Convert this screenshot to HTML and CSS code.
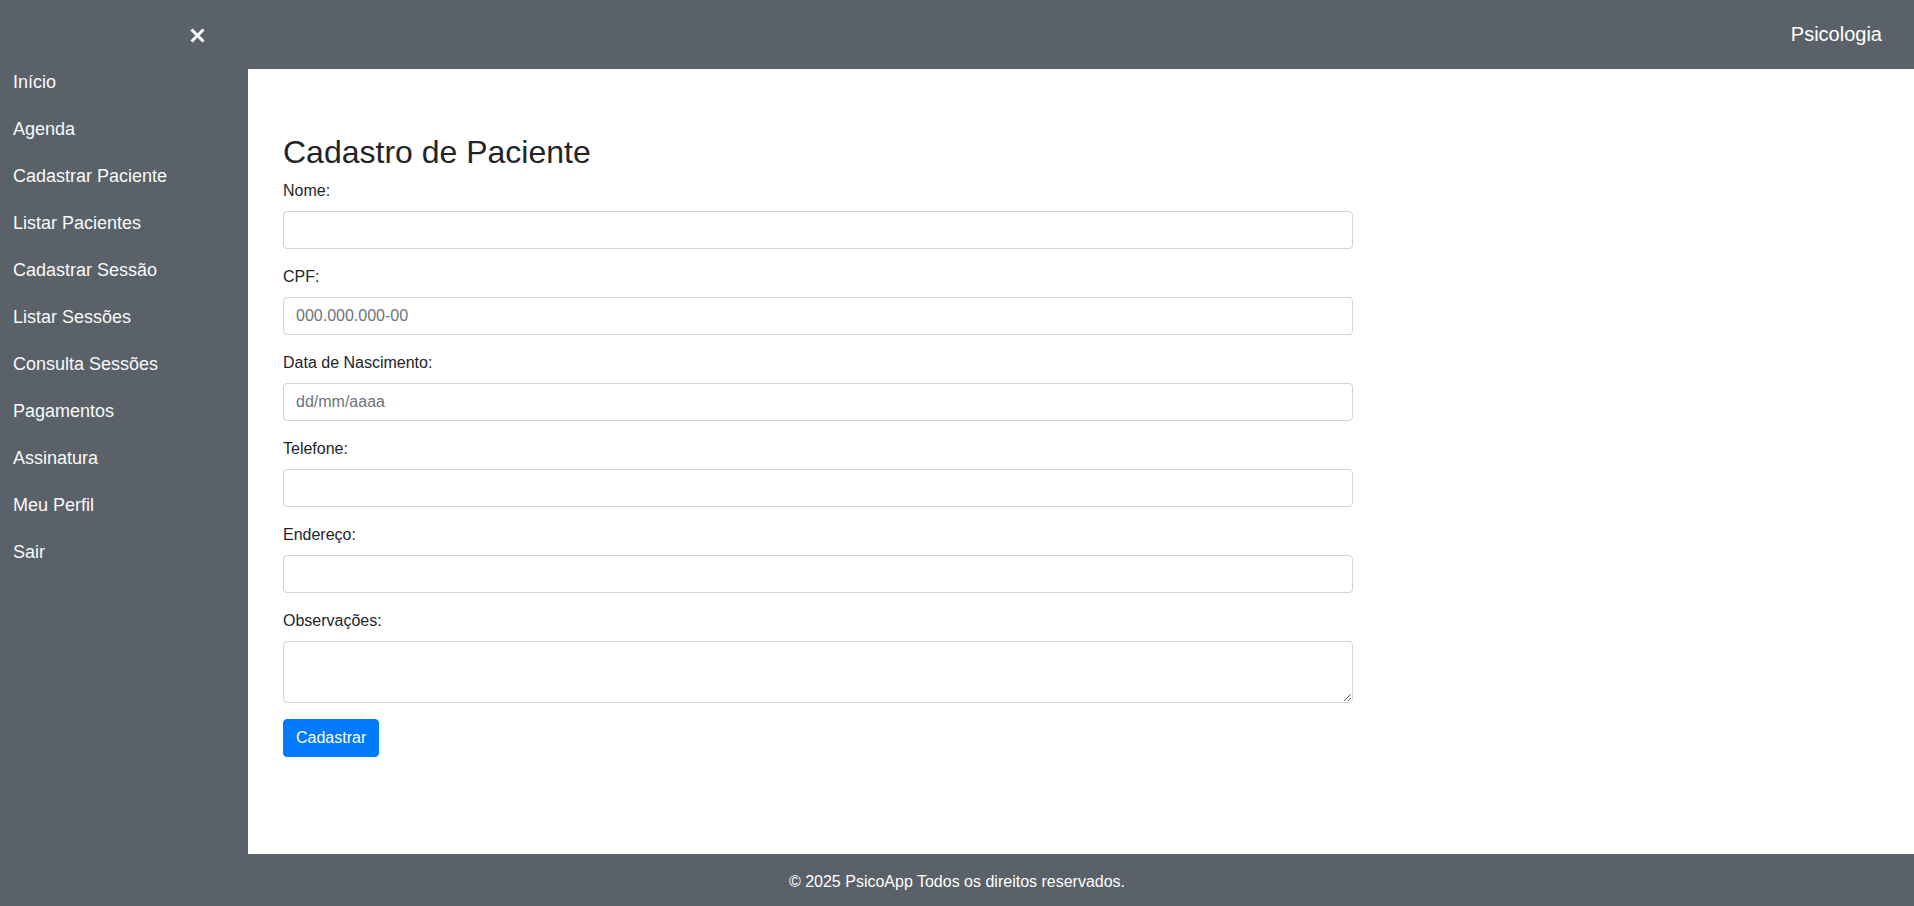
FILE: index.html
```html
<!DOCTYPE html>
<html lang="pt-BR">
<head>
  <meta charset="UTF-8">
  <meta name="viewport" content="width=device-width, initial-scale=1.0">
  <title>PsicoApp - Cadastro de Paciente</title>
  <link rel="stylesheet" href="styles.css">
</head>
<body>
  <div class="layout">
    <aside class="sidebar">
      <div class="sidebar-top">
        <button type="button" class="close-btn" aria-label="Fechar menu">
          <svg width="15" height="15" viewBox="0 0 15 15">
            <path d="M1.5 1.5 L13.5 13.5 M13.5 1.5 L1.5 13.5" stroke="#fff" stroke-width="3" fill="none"/>
          </svg>
        </button>
      </div>
      <nav class="menu">
        <a href="#">Início</a>
        <a href="#">Agenda</a>
        <a href="#">Cadastrar Paciente</a>
        <a href="#">Listar Pacientes</a>
        <a href="#">Cadastrar Sessão</a>
        <a href="#">Listar Sessões</a>
        <a href="#">Consulta Sessões</a>
        <a href="#">Pagamentos</a>
        <a href="#">Assinatura</a>
        <a href="#">Meu Perfil</a>
        <a href="#">Sair</a>
      </nav>
    </aside>

    <header class="topbar">
      <span class="brand">Psicologia</span>
    </header>

    <main class="content">
      <h2>Cadastro de Paciente</h2>
      <form id="paciente-form">
        <div class="form-group">
          <label for="nome">Nome:</label>
          <input type="text" id="nome" class="form-control">
        </div>
        <div class="form-group">
          <label for="cpf">CPF:</label>
          <input type="text" id="cpf" class="form-control" placeholder="000.000.000-00">
        </div>
        <div class="form-group">
          <label for="nascimento">Data de Nascimento:</label>
          <input type="text" id="nascimento" class="form-control" placeholder="dd/mm/aaaa">
        </div>
        <div class="form-group">
          <label for="telefone">Telefone:</label>
          <input type="text" id="telefone" class="form-control">
        </div>
        <div class="form-group">
          <label for="endereco">Endereço:</label>
          <input type="text" id="endereco" class="form-control">
        </div>
        <div class="form-group">
          <label for="obs">Observações:</label>
          <textarea id="obs" class="form-control" rows="2"></textarea>
        </div>
        <button type="submit" class="btn-primary">Cadastrar</button>
      </form>
    </main>

    <footer class="footer">
      &copy; 2025 PsicoApp Todos os direitos reservados.
    </footer>
  </div>
</body>
</html>
```

FILE: styles.css
```css
* {
  box-sizing: border-box;
}

body {
  font-family: "Liberation Sans", Arial, sans-serif;
  font-size: 16px;
  line-height: 1.5;
  margin: 0;
  padding: 0;
  color: #212529;
  background-color: #5a6168;
}

.layout {
  display: grid;
  grid-template-columns: 248px 1fr;
  grid-template-rows: 69px 1fr 52px;
  height: 100vh;
}

.sidebar {
  grid-column: 1;
  grid-row: 1 / 3;
  background-color: #5a6168;
}

.sidebar-top {
  height: 59px;
  display: flex;
  justify-content: flex-end;
  align-items: flex-start;
  padding: 28px 43px 0 0;
}

.close-btn {
  background: none;
  border: none;
  padding: 0;
  width: 15px;
  height: 15px;
  cursor: pointer;
  display: block;
}

.close-btn svg {
  display: block;
}

.menu {
  display: flex;
  flex-direction: column;
}

.menu a {
  display: block;
  color: #f8f9fa;
  text-decoration: none;
  font-size: 18px;
  line-height: 27px;
  padding: 10px 13px;
}

.menu a:hover {
  background-color: #4e545a;
}

.topbar {
  grid-column: 2;
  grid-row: 1;
  background-color: #5a6168;
  display: flex;
  justify-content: flex-end;
  align-items: center;
  padding: 0 32px 2px 0;
}

.brand {
  color: #fff;
  font-size: 20px;
}

.content {
  grid-column: 2;
  grid-row: 2;
  background-color: #fff;
  padding: 64px 35px 0;
}

.content h2 {
  font-size: 32px;
  font-weight: 500;
  line-height: 1.2;
  margin: 0 0 8px;
}

#paciente-form {
  max-width: 1070px;
}

.form-group {
  margin-bottom: 16px;
}

.form-group label {
  display: inline-block;
  margin-bottom: 8px;
}

.form-control {
  display: block;
  width: 100%;
  height: 38px;
  padding: 6px 12px;
  font-family: inherit;
  font-size: 16px;
  line-height: 1.5;
  color: #495057;
  background-color: #fff;
  border: 1px solid #ced4da;
  border-radius: 4px;
  margin: 0;
}

.form-control::placeholder {
  color: #6c757d;
}

textarea.form-control {
  height: 62px;
}

.btn-primary {
  display: inline-block;
  font-family: inherit;
  font-size: 16px;
  line-height: 1.5;
  padding: 6px 12px;
  color: #fff;
  background-color: #007bff;
  border: 1px solid #007bff;
  border-radius: 4px;
  cursor: pointer;
}

.btn-primary:hover {
  background-color: #0069d9;
}

.footer {
  grid-column: 1 / 3;
  grid-row: 3;
  background-color: #5a6168;
  color: #fff;
  text-align: center;
  line-height: 24px;
  padding-top: 16px;
}
```
